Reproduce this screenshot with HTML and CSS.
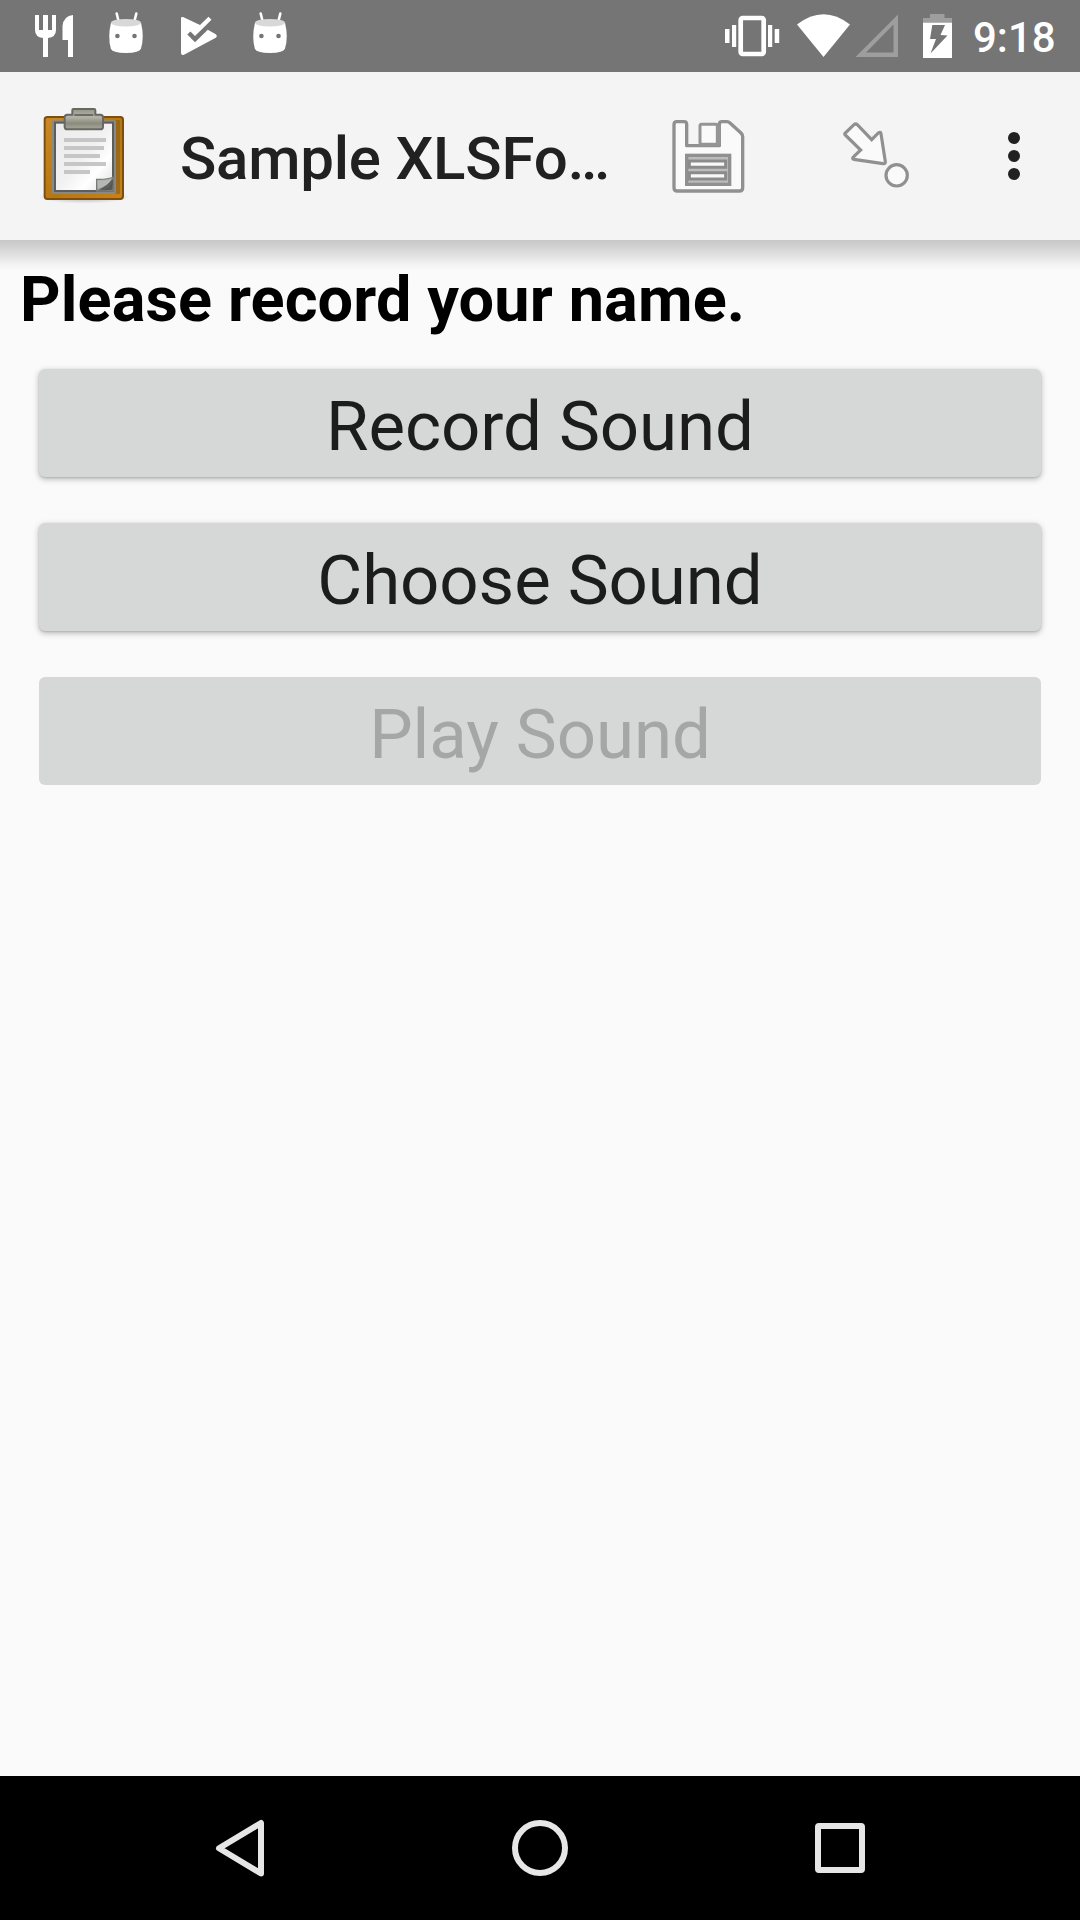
FILE: index.html
```html
<!DOCTYPE html>
<html lang="en">
<head>
<meta charset="utf-8">
<title>Sample XLSForm</title>
<link rel="stylesheet" href="styles.css">
</head>
<body>
<div class="screen">
  <div class="status-bar">
    <div class="notifications">
      <svg class="note-icon" viewBox="0 0 72 72"><path d="M17 15h4v15h4V15h5v15h4V15h4v15q0 7-8 8v19h-5V38q-8-1-8-8zM55 15v42h-5V40h-5.500V26q1-10 10.500-11z"/></svg>
      <svg class="note-icon" viewBox="0 0 72 72">
        <path class="antenna" d="M26.700 13.500l1.700 7M46.300 13.500l-1.700 7"/>
        <path d="M21 22.500Q17.600 37 20.800 48.500 22 52.800 36 53 49.500 52.800 51 48.500 54.500 37 51 22.500z"/>
        <ellipse class="head-top" cx="36" cy="22.700" rx="15" ry="3.800"/>
        <circle class="eye" cx="27.400" cy="36" r="2.300"/><circle class="eye" cx="44.500" cy="36" r="2.300"/>
      </svg>
      <svg class="note-icon" viewBox="0 0 72 72"><path d="M19 18q0-1.500 2-1L38 25l8.500-8.300 3 3L33 36l-4.500-4.500-3.200 3L33 42.200l12.800-12.500 8 4.500q2 1.800 0 3.500L22 54.700q-3 1-3-2z"/></svg>
      <svg class="note-icon" viewBox="0 0 72 72">
        <path class="antenna" d="M26.700 13.500l1.700 7M46.300 13.500l-1.700 7"/>
        <path d="M21 22.500Q17.600 37 20.800 48.500 22 52.800 36 53 49.500 52.800 51 48.500 54.500 37 51 22.500z"/>
        <ellipse class="head-top" cx="36" cy="22.700" rx="15" ry="3.800"/>
        <circle class="eye" cx="27.400" cy="36" r="2.300"/><circle class="eye" cx="44.500" cy="36" r="2.300"/>
      </svg>
    </div>
    <div class="system">
      <svg width="72" height="72" viewBox="720 0 72 72"><rect x="740.700" y="18" width="23" height="36" rx="2" fill="none" stroke="#fff" stroke-width="4.700"/><path d="M725 29h4.500v14H725zM732 25h4.200v22H732zM768 25h4.200v22H768zM774.700 29h4.500v14h-4.500z"/></svg>
      <svg width="62" height="72" viewBox="792 0 62 72"><path d="M797 24.500Q823.500 4 850 24.500L823.500 57z"/></svg>
      <svg width="60" height="72" viewBox="854 0 60 72"><path class="dim" fill-rule="evenodd" d="M855.500 57L898 14.500V57zM866 52.500h27.500V24.500z"/></svg>
      <svg width="60" height="72" viewBox="914 0 60 72"><path class="dim" d="M930 14h14.500v4H952v5h-29v-5h7z"/><path fill-rule="evenodd" d="M923 22.700h29V58h-29zM932.300 25l-2.300 14h6l-5.500 14.500L947.500 35.500l-7-.5 4.500-10z"/></svg>
      <span class="clock">9:18</span>
    </div>
  </div>

  <header class="app-bar">
    <svg class="form-icon" viewBox="0 0 390 390">
      <defs>
        <linearGradient id="board" x1="0" x2="1" y2="1"><stop stop-color="#c98a27"/><stop offset=".55" stop-color="#b67713"/><stop offset="1" stop-color="#c9821b"/></linearGradient>
        <linearGradient id="paper" x2="1" y2="1"><stop stop-color="#ececec"/><stop offset=".5" stop-color="#f1f1f1"/><stop offset=".72" stop-color="#fff"/><stop offset="1" stop-color="#ddd"/></linearGradient>
        <linearGradient id="clip" x2="0" y2="1"><stop stop-color="#969788"/><stop offset=".4" stop-color="#b4b5a8"/><stop offset=".7" stop-color="#8b8c7d"/><stop offset="1" stop-color="#a7a89c"/></linearGradient>
        <linearGradient id="curl" x2="1" y2="1"><stop stop-color="#c8cac6"/><stop offset=".5" stop-color="#8d908b"/><stop offset=".6" stop-color="#555753"/><stop offset="1" stop-color="#aaa"/></linearGradient>
        <radialGradient id="ground"><stop stop-color="#000" stop-opacity=".3"/><stop offset="1" stop-color="#000" stop-opacity="0"/></radialGradient>
      </defs>
      <ellipse cx="192" cy="321" rx="138" ry="20" fill="url(#ground)"/>
      <rect x="74" y="81" width="235" height="246" rx="8" fill="url(#board)" stroke="#7d4f0d" stroke-width="6"/>
      <rect x="284" y="90" width="16" height="222" fill="#8f6419" opacity=".75"/>
      <rect x="96" y="91" width="192" height="220" rx="3" fill="#888a85"/>
      <rect x="105" y="98" width="174" height="205" fill="url(#paper)" stroke="#5b5d5f" stroke-width="6"/>
      <path fill="#c6c6c6" d="M132 144h126v12H132zM132 168h120v12H132zM132 192h108v12H132zM132 216h126v12H132zM132 240h78v12h-78z"/>
      <path fill="url(#curl)" stroke="#777a75" stroke-width="4" d="M230 268q34 1 51-7v42h-51z"/>
      <path fill="#b4b7b2" d="M233 271q26 2 43-6-10 24-43 32z"/>
      <path fill="#484a48" d="M250 300q20-9 28-24v24z" opacity=".75"/>
      <path fill="url(#clip)" stroke="#666963" stroke-width="6" stroke-linejoin="round" d="M160 57h62q4 0 4 4v13h15q8 0 8 8v28q0 8-8 8h-99q-8 0-8-8V82q0-8 8-8h15V61q0-4 3-4z"/>
      <path stroke="#5e615b" stroke-width="5" d="M163 75h57"/>
    </svg>
    <h1 class="title">Sample XLSFo…</h1>
    <svg class="save-icon" viewBox="0 0 390 390">
      <path fill="#fafafa" stroke="#909090" stroke-width="10" stroke-linejoin="round" d="M80 95h22q8 0 8 8v64h98v-64q0-8 8-8h15q5 0 9 4l33 30q5 5 5 11v153q0 10-10 10H82q-10 0-10-10V104q0-9 8-9z"/>
      <rect x="150" y="103" width="52" height="60" rx="5" fill="#fafafa" stroke="#959595" stroke-width="9"/>
      <path stroke="#959595" stroke-width="12" d="M205 106v60"/>
      <rect x="110" y="196" width="129" height="87" fill="#bcbcbc" stroke="#909090" stroke-width="10"/>
      <path fill="#f8f8f8" stroke="#8b8b8b" stroke-width="9" d="M118 213h109v19H118zM118 248h109v19H118z"/>
    </svg>
    <svg class="jump-icon" viewBox="0 0 240 390">
      <path d="M76 129l26-25q5-4 10 0l43 45 20-20q7-5 8 2l13 84q1 7-7 6l-87-13q-7-1-2-7l22-21-46-45q-4-3 0-6z"/>
      <circle cx="230" cy="256" r="32"/>
    </svg>
    <svg class="menu-icon" viewBox="0 0 36 144"><circle cx="18" cy="18" r="18"/><circle cx="18" cy="72" r="18"/><circle cx="18" cy="126" r="18"/></svg>
  </header>

  <main class="form">
    <h2 class="prompt">Please record your name.</h2>
    <div class="actions">
      <button class="action">Record Sound</button>
      <button class="action">Choose Sound</button>
      <button class="action" disabled>Play Sound</button>
    </div>
  </main>

  <nav class="nav-bar">
    <svg viewBox="0 0 144 144"><path d="M93 47v50.500L51 72.300z"/></svg>
    <svg viewBox="0 0 144 144"><circle cx="72" cy="72" r="25"/></svg>
    <svg viewBox="0 0 144 144"><rect x="50" y="50" width="44" height="44" rx="1"/></svg>
  </nav>
</div>
</body>
</html>
```
FILE: styles.css
```css
* { box-sizing: border-box; }
body { margin: 0; font-family: Roboto, sans-serif; }
.screen {
  width: 1080px;
  height: 1920px;
  display: flex;
  flex-direction: column;
  overflow: hidden;
  background: #fafafa;
}
svg { display: block; flex: none; overflow: visible; }

.status-bar {
  height: 72px;
  display: flex;
  justify-content: space-between;
  padding: 0 25px 0 18px;
  background: #757575;
  fill: #fff;
}
.notifications, .system { display: flex; }
.note-icon { width: 72px; height: 72px; }
.antenna { stroke: #fff; stroke-width: 2.600; stroke-linecap: round; }
.head-top { fill: #d8d8d8; }
.eye { fill: #757575; }
.dim { fill: #9e9e9e; }
.clock {
  width: 81px;
  padding-top: 2px;
  font-size: 42px;
  font-weight: 500;
  line-height: 72px;
  white-space: nowrap;
  text-indent: -1px;
  color: #fff;
}

.app-bar {
  height: 168px;
  display: flex;
  align-items: flex-start;
  padding: 18px 48px 0 20px;
  background: #f4f4f4;
}
.form-icon { width: 130px; height: 130px; }
.title {
  width: 470px;
  margin: 0 0 0 30px;
  padding-top: 5px;
  font-size: 60px;
  font-weight: 500;
  line-height: 128px;
  letter-spacing: -0.22px;
  white-space: nowrap;
  color: #212121;
}
.save-icon { width: 130px; height: 130px; }
.jump-icon {
  width: 80px;
  height: 130px;
  margin-left: 40px;
  fill: #fafafa;
  stroke: #909090;
  stroke-width: 9.500;
}
.menu-icon {
  width: 12px;
  height: 48px;
  margin: 42px 0 0 108px;
  fill: #212121;
}

.form {
  flex: 1;
  padding: 27px 21px 0;
  background: linear-gradient(#c8c8c8, #d4d4d4 8px, #e4e4e4 17px, #f4f4f4 25px, #fafafa 31px);
}
.prompt {
  margin: 0 0 0 -1px;
  font-size: 63px;
  font-weight: 700;
  line-height: 66px;
  letter-spacing: 0.12px;
  color: #000;
}
.actions {
  display: grid;
  gap: 46px;
  padding: 36px 18px 0;
}
.action {
  height: 108px;
  padding: 7px 0 0;
  border: 0;
  border-radius: 6px;
  background: #d6d8d7;
  box-shadow: 0 2px 6px rgba(0, 0, 0, .28), 0 1px 2px rgba(0, 0, 0, .12);
  font: 400 69px/100px Roboto, sans-serif;
  letter-spacing: -0.08px;
  color: #1c1c1c;
}
.action:disabled { box-shadow: none; color: #a5a7a6; }

.nav-bar {
  height: 144px;
  display: flex;
  justify-content: center;
  gap: 156px;
  background: #000;
  fill: none;
  stroke: #e6e6e6;
  stroke-width: 6;
  stroke-linejoin: round;
}
.nav-bar svg { width: 144px; height: 144px; }
```
